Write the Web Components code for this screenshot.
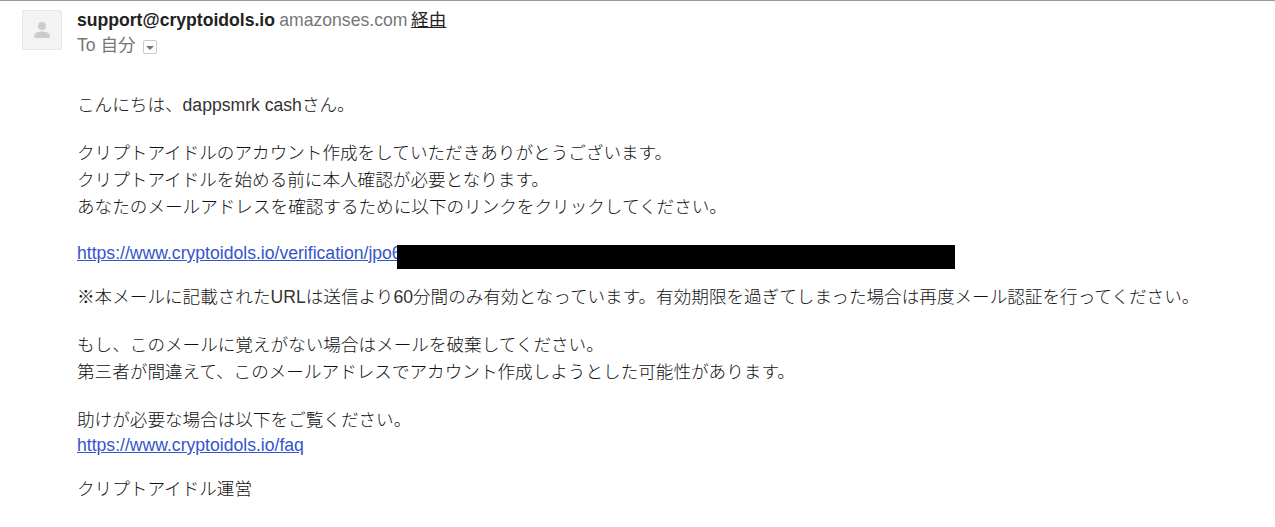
<!DOCTYPE html>
<html><head><meta charset="utf-8"><style>
html,body{margin:0;padding:0;background:#fff}
body{font-family:"Liberation Sans","Noto Sans CJK JP",sans-serif;overflow:hidden}
</style></head><body>
<template id="hdr"><style>
:host{display:flex;border-top:1px solid #999;padding:9px 0 0 22px;height:81.5px;font-size:17.6px;color:#222}
.av{width:40px;height:40px;background:#f3f3f3;border:1px solid #e8e8e8;box-sizing:border-box;display:flex;align-items:center;justify-content:center;margin-right:15px}
.top{line-height:21px;word-spacing:-.6px}
.via{color:#777;margin-right:-.6px}
.to{color:#777;line-height:21px;margin-top:4px;display:flex;align-items:center}
.btn{display:inline-block;margin-left:7px;width:14px;height:14px;border:1px solid #ccc;border-radius:2px;position:relative;box-sizing:border-box;margin-top:3px}
.btn:after{content:"";position:absolute;left:2px;top:5px;border:4px solid transparent;border-top:4px solid #777;border-bottom:0}
</style>
<div class="av"><svg width="20" height="20" viewBox="0 0 20 20"><circle cx="10" cy="6" r="4" fill="#ccc"/><path d="M2 16c0-3.500 5-4.600 8-4.600s8 1.100 8 4.600c0 1.300-.7 2-2 2H4c-1.300 0-2-.7-2-2z" fill="#ccc"/></svg></div>
<div><div class="top"><b>support@cryptoidols.io</b> <span class="via">amazonses.com</span> <u>経由</u></div><div class="to">To 自分 <span class="btn"></span></div></div>
</template>
<template id="para"><style>
:host{display:block;margin:0 0 21px;font-size:17.6px;color:#111;white-space:nowrap}
</style><slot></slot></template>
<template id="line"><style>
:host{display:block;line-height:27px;font-weight:300}
</style><slot></slot></template>
<template id="link"><style>
:host{display:block;line-height:21px;padding-top:1px;margin-bottom:-1px}
a{color:#35c}
</style><a href="#"><slot></slot></a></template>
<template id="latin"><style>
:host{color:#333}
</style><slot></slot></template>
<template id="body"><style>
:host{display:block;padding:0 0 0 77px}
</style><slot></slot></template>
<template id="red"><style>
:host{position:absolute;left:397px;top:245px;width:558px;height:24px;background:#000}
</style></template>
<mail-header></mail-header>
<mail-body>
<mail-para><mail-line>こんにちは、<mail-latin>dappsmrk cash</mail-latin>さん。</mail-line></mail-para>
<mail-para><mail-line>クリプトアイドルのアカウント作成をしていただきありがとうございます。</mail-line><mail-line>クリプトアイドルを始める前に本人確認が必要となります。</mail-line><mail-line>あなたのメールアドレスを確認するために以下のリンクをクリックしてください。</mail-line></mail-para>
<mail-para><mail-link>https://www.cryptoidols.io/verification/jpo6</mail-link></mail-para>
<mail-para><mail-line>※本メールに記載された<mail-latin>URL</mail-latin>は送信より<mail-latin>60</mail-latin>分間のみ有効となっています。有効期限を過ぎてしまった場合は再度メール認証を行ってください。</mail-line></mail-para>
<mail-para><mail-line>もし、このメールに覚えがない場合はメールを破棄してください。</mail-line><mail-line>第三者が間違えて、このメールアドレスでアカウント作成しようとした可能性があります。</mail-line></mail-para>
<mail-para><mail-line>助けが必要な場合は以下をご覧ください。</mail-line><mail-link>https://www.cryptoidols.io/faq</mail-link></mail-para>
<mail-para><mail-line>クリプトアイドル運営</mail-line></mail-para>
</mail-body>
<mail-redact></mail-redact>
<script>
function reg(name,tpl){customElements.define(name,class extends HTMLElement{constructor(){super();this.attachShadow({mode:'open'}).appendChild(document.getElementById(tpl).content.cloneNode(true))}})}
reg('mail-header','hdr');reg('mail-para','para');reg('mail-line','line');reg('mail-link','link');reg('mail-latin','latin');reg('mail-body','body');reg('mail-redact','red');
</script>
</body></html>
